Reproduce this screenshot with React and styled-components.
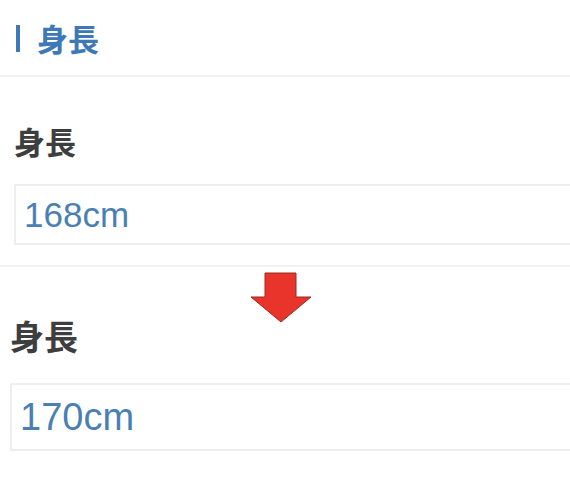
import React from "react";
import styled, { createGlobalStyle } from "styled-components";

const Global = createGlobalStyle`
  html, body { margin: 0; padding: 0; background: #ffffff; overflow: hidden; }
  body { width: 570px; height: 480px; font-family: "Noto Sans CJK JP", "Noto Sans", sans-serif; }
`;

const Page = styled.div`
  width: 570px;
  height: 480px;
  display: flex;
  flex-direction: column;
  position: relative;
  overflow: hidden;
`;

const Header = styled.div`
  display: flex;
  align-items: center;
  gap: 17px;
  padding-left: 16px;
  border-bottom: 2px solid #f1f1f1;
  box-sizing: border-box;
  height: 77px;
`;

const Bar = styled.div`
  width: 4px;
  height: 27px;
  background: #3f78b6;
  margin-top: 1px;
`;

const Title = styled.div`
  font-family: "Noto Sans CJK JP", sans-serif;
  font-weight: 700;
  font-size: 31px;
  line-height: 31px;
  color: #3f78b6;
`;

const Section = styled.div`
  display: flex;
  flex-direction: column;
  padding: ${(p) => p.$pad};
  border-bottom: ${(p) => (p.$divider ? "2px solid #f1f1f1" : "none")};
  flex: ${(p) => (p.$grow ? 1 : "none")};
`;

const Label = styled.div`
  font-family: "Noto Sans CJK JP", sans-serif;
  font-weight: 700;
  font-size: ${(p) => p.$size}px;
  line-height: ${(p) => p.$size}px;
  color: #3e3e3e;
`;

const Field = styled.div`
  display: flex;
  align-items: center;
  width: 620px;
  height: ${(p) => p.$h}px;
  box-sizing: border-box;
  border: 2px solid #eeeeee;
  padding-left: ${(p) => p.$padL}px;
  margin-top: ${(p) => p.$gap}px;
`;

const Value = styled.span`
  font-family: "Liberation Sans", Arial, sans-serif;
  font-size: ${(p) => p.$size}px;
  line-height: 1;
  color: #4a7fb4;
`;

const Arrow = styled.svg`
  position: absolute;
  left: 250px;
  top: 272px;
  width: 62px;
  height: 52px;
`;

export default function App() {
  return (
    <Page>
      <Global />
      <Header>
        <Bar />
        <Title>身長</Title>
      </Header>
      <Section $pad="48px 0 20px 14px" $divider>
        <Label $size={31}>身長</Label>
        <Field $h={61} $gap={28} $padL={8}>
          <Value $size={35}>168cm</Value>
        </Field>
      </Section>
      <Section $pad="52px 0 0 10px" $grow>
        <Label $size={34}>身長</Label>
        <Field $h={68} $gap={30} $padL={8}>
          <Value $size={38}>170cm</Value>
        </Field>
      </Section>
      <Arrow viewBox="0 0 62 52">
        <polygon
          points="15,1 46,1 46,25 61,25 31,50 1,25 15,25"
          fill="#e8342a"
          stroke="#9a2a22"
          strokeWidth="1"
          strokeLinejoin="miter"
        />
      </Arrow>
    </Page>
  );
}
